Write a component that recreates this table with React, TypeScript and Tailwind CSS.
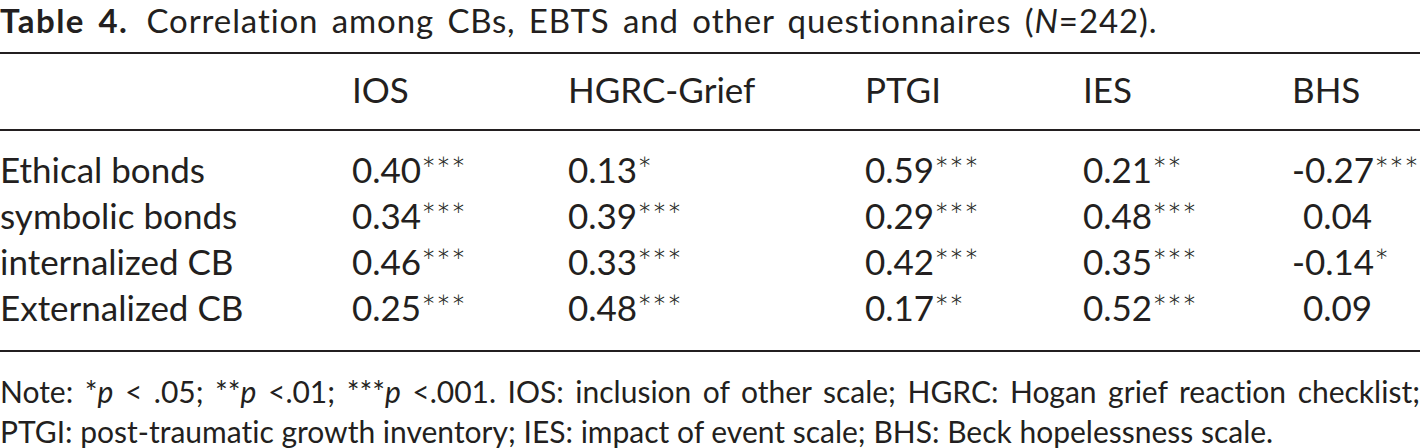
import React from 'react';

type Row = {
  label: string;
  values: { v: string; stars: string; pad?: boolean }[];
};

const rows: Row[] = [
  {
    label: 'Ethical bonds',
    values: [
      { v: '0.40', stars: '***' },
      { v: '0.13', stars: '*' },
      { v: '0.59', stars: '***' },
      { v: '0.21', stars: '**' },
      { v: '-0.27', stars: '***' },
    ],
  },
  {
    label: 'symbolic bonds',
    values: [
      { v: '0.34', stars: '***' },
      { v: '0.39', stars: '***' },
      { v: '0.29', stars: '***' },
      { v: '0.48', stars: '***' },
      { v: '0.04', stars: '', pad: true },
    ],
  },
  {
    label: 'internalized CB',
    values: [
      { v: '0.46', stars: '***' },
      { v: '0.33', stars: '***' },
      { v: '0.42', stars: '***' },
      { v: '0.35', stars: '***' },
      { v: '-0.14', stars: '*' },
    ],
  },
  {
    label: 'Externalized CB',
    values: [
      { v: '0.25', stars: '***' },
      { v: '0.48', stars: '***' },
      { v: '0.17', stars: '**' },
      { v: '0.52', stars: '***' },
      { v: '0.09', stars: '', pad: true },
    ],
  },
];

const headers = ['IOS', 'HGRC-Grief', 'PTGI', 'IES', 'BHS'];

const cols = 'grid grid-cols-[352px_216px_297px_218px_209px_1fr]';

const App: React.FC = () => {
  return (
    <div className="w-[1422px] h-[448px] bg-white text-[#231f20] font-['Lato','Open_Sans',sans-serif] [font-variant-ligatures:none] overflow-hidden">
      {/* caption */}
      <div className="text-[33px] leading-[40px] [word-spacing:4px] whitespace-nowrap">
        <span className="font-bold tracking-[1.5px]">Table 4.</span>
        <span className="ml-[18px] tracking-[0.9px]">
          Correlation among CBs, EBTS and other questionnaires (<i>N</i>=242).
        </span>
      </div>

      <div className="mt-[12px] w-[1420px] border-t-2 border-[#231f20]">
        <div className={`${cols} text-[35px] leading-[46px] pt-[12px] pb-[17px] border-b-2 border-[#231f20]`}>
          <div></div>
          {headers.map((h) => (
            <div key={h}>{h}</div>
          ))}
        </div>

        <div className="pt-[15px] pb-[20px] border-b-2 border-[#231f20]">
          {rows.map((r) => (
            <div key={r.label} className={`${cols} text-[35px] leading-[46px] whitespace-nowrap`}>
              <div>{r.label}</div>
              {r.values.map((c, i) => (
                <div key={i} className={c.pad ? 'pl-[11px]' : ''}>
                  {c.v}
                  {c.stars && <span className="font-light">{c.stars}</span>}
                </div>
              ))}
            </div>
          ))}
        </div>
      </div>

      {/* note */}
      <div className="w-[1420px] pt-[19px] text-[30px] leading-[40px]">
        <div className="text-justify [text-align-last:justify] whitespace-nowrap">
          Note: *<i>p</i> &lt; .05; **<i>p</i> &lt;.01; ***<i>p</i> &lt;.001. IOS: inclusion of other scale; HGRC: Hogan grief
          reaction checklist;
        </div>
        <div className="whitespace-nowrap">
          PTGI: post-traumatic growth inventory; IES: impact of event scale; BHS: Beck hopelessness scale.
        </div>
      </div>
    </div>
  );
};

export default App;
